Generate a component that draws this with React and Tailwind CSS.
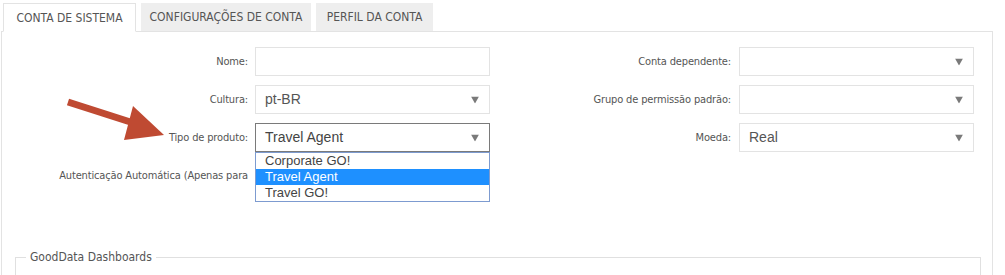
import React from "react";

const tahoma = "font-['DejaVu_Sans_Condensed','DejaVu_Sans',sans-serif] font-stretch-condensed";

function Caret() {
  return (
    <svg width="8" height="7" viewBox="0 0 8 7" className="absolute right-[10px] top-1/2 -translate-y-1/2">
      <polygon points="0,0 8,0 4,7" fill="#7a7a7a" />
    </svg>
  );
}

function Select({ value, dark }) {
  return (
    <div
      className={`relative ml-[7px] w-[235px] h-[29px] border bg-white flex items-center pl-[9px] text-[14px] ${
        dark ? "border-[#7a7a7a] text-[#444]" : "border-[#e3e3e3] text-[#555]"
      }`}
    >
      {value}
      <Caret />
    </div>
  );
}

function Label({ children, w }) {
  return (
    <div className={`${w} ${tahoma} text-right text-[11px] tracking-[-0.15px] text-[#555] shrink-0 whitespace-nowrap pt-[2px]`}>{children}</div>
  );
}

export default function App() {
  return (
    <div className="relative w-[1005px] h-[275px] bg-white overflow-hidden font-['Liberation_Sans',Arial,sans-serif]">
      {/* Tabs */}
      <div className={`flex pl-[3px] pt-[3px] gap-[5px] relative z-10 ${tahoma} text-[12px] text-[#555] whitespace-nowrap`}>
        <div className="w-[133px] h-[29px] bg-white border border-[#e3e3e3] border-b-white flex items-center justify-center">
          CONTA DE SISTEMA
        </div>
        <div className="w-[170px] h-[28px] bg-[#eeeeee] flex items-center justify-center">
          CONFIGURAÇÕES DE CONTA
        </div>
        <div className="w-[117px] h-[28px] bg-[#eeeeee] flex items-center justify-center">
          PERFIL DA CONTA
        </div>
      </div>

      {/* Panel */}
      <div className="relative ml-[1px] mt-[-1px] w-[992px] h-[260px] border border-[#e3e3e3] border-b-0 pt-[15px]">
        <div className="flex flex-col gap-[9px]">
          <div className="flex items-center">
            <Label w="w-[246px]">Nome:</Label>
            <div className="ml-[7px] w-[235px] h-[29px] border border-[#e3e3e3] bg-white" />
            <Label w="w-[241px]">Conta dependente:</Label>
            <div className="ml-[1px]"><Select value="" /></div>
          </div>
          <div className="flex items-center">
            <Label w="w-[246px]">Cultura:</Label>
            <Select value="pt-BR" />
            <Label w="w-[241px]">Grupo de permissão padrão:</Label>
            <div className="ml-[1px]"><Select value="" /></div>
          </div>
          <div className="flex items-center">
            <Label w="w-[246px]">Tipo de produto:</Label>
            <div className="relative">
              <Select value="Travel Agent" dark />
              <div className="absolute left-[7px] top-[29px] w-[235px] border border-[#7d9bd0] bg-white text-[13px] text-[#444] z-20 leading-[16px]">
                <div className="h-[16px] pl-[9px]">Corporate GO!</div>
                <div className="h-[16px] pl-[9px] bg-[#1e90ff] text-white">Travel Agent</div>
                <div className="h-[16px] pl-[9px]">Travel GO!</div>
              </div>
            </div>
            <Label w="w-[241px]">Moeda:</Label>
            <div className="ml-[1px]"><Select value="Real" /></div>
          </div>
          <div className="flex items-center h-[29px]">
            <Label w="w-[246px]">Autenticação Automática (Apenas para</Label>
          </div>
        </div>

        {/* Fieldset */}
        <fieldset className="absolute left-[13px] top-[218px] w-[966px] h-[60px] border border-[#e0e0e0] px-[10px]">
          <legend className={`px-[4px] ${tahoma} text-[12px] text-[#555] leading-[14px]`}>GoodData Dashboards</legend>
        </fieldset>
      </div>

      {/* Annotation arrow */}
      <svg className="absolute left-0 top-0 pointer-events-none z-30" width="200" height="160">
        <line x1="68" y1="102" x2="146" y2="127" stroke="#bf4a32" strokeWidth="7" />
        <polygon points="164,135 124,140 133,106" fill="#bf4a32" />
      </svg>
    </div>
  );
}
